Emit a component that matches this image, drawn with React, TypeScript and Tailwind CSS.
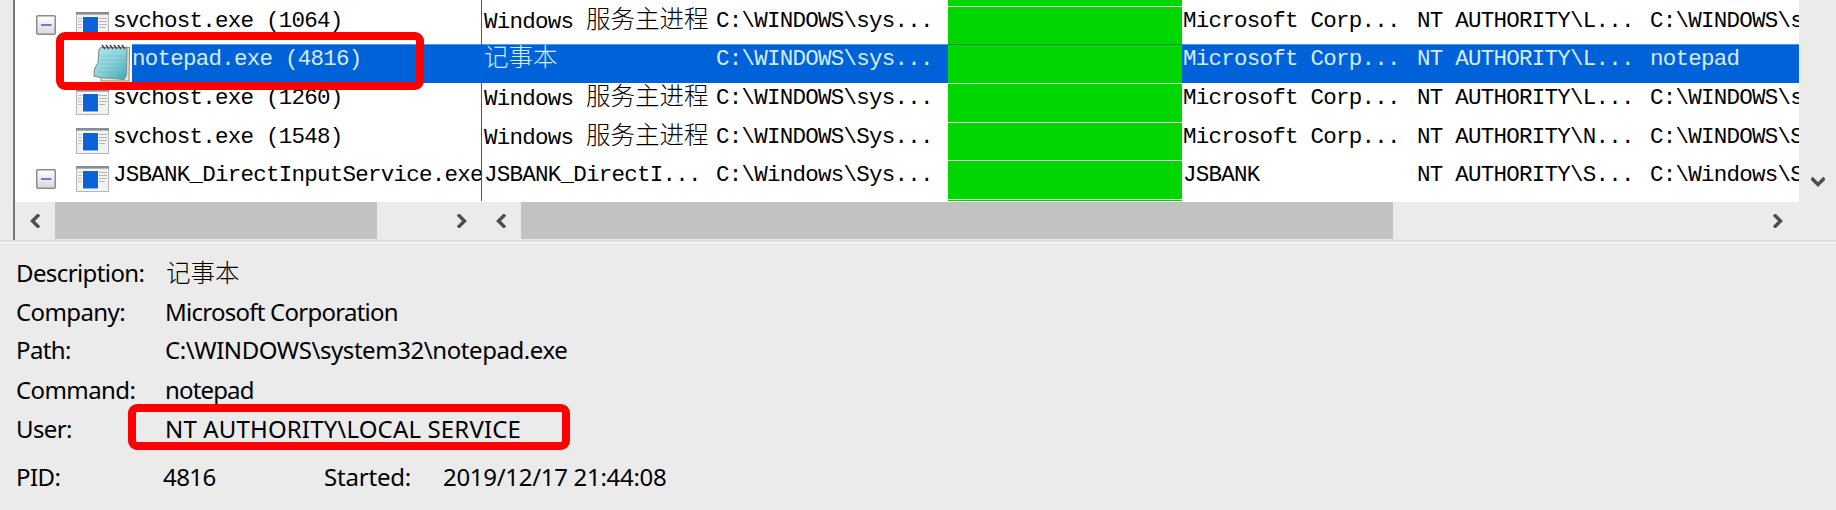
import React from "react";

type Row = {
  name: string;
  desc: React.ReactNode;
  path: string;
  company: string;
  user: string;
  command: string;
  kind: "plain" | "toggle" | "child";
  height: string;
};

const latin = "font-['Liberation_Mono','Noto_Sans_CJK_SC',monospace] text-[22.5px] tracking-[-0.75px]";

const Han = ({ children }: { children: string }) => (
  <span className="font-['Noto_Sans_CJK_SC',sans-serif] text-[24.5px] font-light leading-none tracking-normal">{children}</span>
);

const service = (
  <>
    Windows <Han>服务主进程</Han>
  </>
);

const rows: Row[] = [
  { name: "svchost.exe (1064)", desc: service, path: "C:\\WINDOWS\\sys...", company: "Microsoft Corp...", user: "NT AUTHORITY\\L...", command: "C:\\WINDOWS\\s", kind: "toggle", height: "h-[38px]" },
  { name: "notepad.exe (4816)", desc: <Han>记事本</Han>, path: "C:\\WINDOWS\\sys...", company: "Microsoft Corp...", user: "NT AUTHORITY\\L...", command: "notepad", kind: "child", height: "h-[39px]" },
  { name: "svchost.exe (1260)", desc: service, path: "C:\\WINDOWS\\sys...", company: "Microsoft Corp...", user: "NT AUTHORITY\\L...", command: "C:\\WINDOWS\\s", kind: "plain", height: "h-[39px]" },
  { name: "svchost.exe (1548)", desc: service, path: "C:\\WINDOWS\\Sys...", company: "Microsoft Corp...", user: "NT AUTHORITY\\N...", command: "C:\\WINDOWS\\S", kind: "plain", height: "h-[38px]" },
  { name: "JSBANK_DirectInputService.exe", desc: "JSBANK_DirectI...", path: "C:\\Windows\\Sys...", company: "JSBANK", user: "NT AUTHORITY\\S...", command: "C:\\Windows\\S", kind: "toggle", height: "h-[39px]" },
];

const Minus = () => (
  <svg width="20" height="20" viewBox="0 0 20 20">
    <defs>
      <linearGradient id="mg" x1="0" y1="0" x2="0" y2="1">
        <stop offset="0" stopColor="#fff" />
        <stop offset="1" stopColor="#d8d8d8" />
      </linearGradient>
    </defs>
    <rect x="0.75" y="0.75" width="18.5" height="18.5" rx="1" fill="url(#mg)" stroke="#8c8c8c" strokeWidth="1.5" />
    <path d="M5 10h10.500" stroke="#4b63b7" strokeWidth="1.6" />
  </svg>
);

const AppIcon = () => (
  <svg width="33" height="26" viewBox="0 0 33 26" className="shrink-0">
    <rect x="0.5" y="0.5" width="32" height="25" fill="#f1f2f2" stroke="#b4b8ba" />
    <rect width="33" height="2.600" fill="#868d92" />
    <path d="M2 6.500h4M2 9.500h4M2 12.500h4M2 15.500h4" stroke="#c4c4c4" />
    <path d="M23 6.500h8M23 9.500h8M23 12.500h8M23 15.500h6" stroke="#b4b4b4" />
    <rect x="6" y="4" width="17" height="19.500" fill="#fff" />
    <rect x="7" y="5" width="15" height="17.500" fill="#0a63d8" />
  </svg>
);

const NotepadIcon = () => (
  <svg width="38" height="38" viewBox="0 0 38 38" className="shrink-0">
    <defs>
      <linearGradient id="ng" x1="0" y1="0" x2="1" y2="1">
        <stop offset="0" stopColor="#b5e6ea" />
        <stop offset="0.5" stopColor="#8bd3db" />
        <stop offset="1" stopColor="#3fa4b4" />
      </linearGradient>
    </defs>
    <path d="M8 33.500V37H36L36.500 3.500L33 3Z" fill="#efe7d2" stroke="#9a8a66" strokeWidth="1.100" />
    <path d="M8 3.500H34L33.500 31L31 35.500L7 33.500L1 32L1.500 25L5 19L6 6Z" fill="url(#ng)" stroke="#7a8f90" strokeWidth="1.100" />
    <path d="M8 12h23M7.500 16h23M7 20h23M6 24h24M5 28h24" stroke="#64bac6" strokeWidth="0.6" />
    <path d="M9 1l3 4M13 1l3 4M17 1l3 4M21 1l3 4M25 1l3 4M29 1l3 4" stroke="#46433e" strokeWidth="1.500" />
  </svg>
);

const Chevron = ({ turn }: { turn: string }) => (
  <svg width="14" height="14" viewBox="0 0 14 14" className={turn}>
    <path d="M3 0.500L9.500 7L3 13.500" fill="none" stroke="#4d4d4d" strokeWidth="3.400" />
  </svg>
);

const Bar = ({ thumb, width, pad }: { thumb: string; width: string; pad: string }) => (
  <div className={`flex h-[37px] items-center justify-between ${width}`}>
    <div className="flex h-full items-center">
      <div className="flex w-10 justify-center pr-[1px]">
        <Chevron turn="rotate-180" />
      </div>
      <div className={`h-full bg-[#c2c2c2] ${thumb}`} />
    </div>
    <div className={pad}>
      <Chevron turn="" />
    </div>
  </div>
);

const TreeCell = ({ row }: { row: Row }) => {
  if (row.kind === "child")
    return (
      <div className="flex h-full w-[466px] shrink-0 pl-[78px]">
        <NotepadIcon />
        <div className="ml-[1px] h-full grow bg-[#0062d9] text-[#d5ecff] shadow-[inset_0_1px_0_#4a9be8]">{row.name}</div>
      </div>
    );
  return (
    <div className="flex h-full w-[466px] shrink-0">
      <div className="w-[61px] shrink-0 pl-[21px] pt-[9px]">{row.kind === "toggle" && <Minus />}</div>
      <div className="w-[37px] shrink-0 pt-[6px]">
        <AppIcon />
      </div>
      <div>{row.name}</div>
    </div>
  );
};

const TableRow = ({ row }: { row: Row }) => {
  const on = row.kind === "child";
  return (
    <div className={`flex ${row.height} w-[1784px] shrink-0 overflow-hidden whitespace-pre leading-[30px] ${latin}`}>
      <TreeCell row={row} />
      <div className="h-full w-px shrink-0 bg-[#555]" />
      <div
        className={`flex h-full grow overflow-hidden ${on ? "bg-[#0062d9] text-[#d5ecff] shadow-[inset_0_1px_0_#4a9be8]" : "text-black"}`}
      >
        <div className="w-[234px] shrink-0 pl-[2px]">{row.desc}</div>
        <div className="w-[232px] shrink-0">{row.path}</div>
        <div className={`h-full w-[234px] shrink-0 border-t bg-[#00d600] ${on ? "border-[#0a8a5c]" : "border-[#d8ffd0]"}`} />
        <div className="w-[233px] shrink-0 pl-[1px]">{row.company}</div>
        <div className="w-[233px] shrink-0 pl-[2px]">{row.user}</div>
        <div className="w-[150px] shrink-0 pl-[2px]">{row.command}</div>
      </div>
    </div>
  );
};

const Field = ({ label, value, height, spacing }: { label: string; value: React.ReactNode; height: string; spacing: string }) => (
  <div className={`flex ${height}`}>
    <div className="w-[149px]">{label}</div>
    <div className={spacing}>{value}</div>
  </div>
);

export default function App() {
  return (
    <div className="relative flex h-[510px] w-[1836px] flex-col overflow-hidden bg-[#ebebeb]">
      <div className="flex h-[240px] w-full shrink-0 pl-[13px]">
        <div className="w-[2px] shrink-0 bg-[#777]" />
        <div className="flex w-[1784px] shrink-0 flex-col">
          <div className="flex h-[202px] shrink-0 flex-col overflow-hidden rounded-br-[2px] bg-white">
            <div className="flex h-[6px] shrink-0">
              <div className="ml-[466px] w-px bg-[#555]" />
              <div className="ml-[466px] w-[234px] bg-[#00d600]" />
            </div>
            {rows.map((row) => (
              <TableRow key={row.name} row={row} />
            ))}
            <div className="flex h-[2px] shrink-0">
              <div className="ml-[466px] w-px bg-[#555]" />
              <div className="ml-[466px] w-[234px] border-t border-[#d8ffd0] bg-[#00d600]" />
            </div>
          </div>
          <div className="flex">
            <Bar thumb="w-[322px]" width="w-[466px]" pad="pr-[12px]" />
            <Bar thumb="w-[872px]" width="w-[1318px]" pad="pr-[14px]" />
          </div>
        </div>
        <div className="flex grow justify-center pt-[175px]">
          <Chevron turn="rotate-90" />
        </div>
      </div>
      <div className="h-[3px] shrink-0 border-b border-white bg-[#dfdfdf]" />
      <div className="flex flex-col whitespace-pre pl-4 pt-[13px] font-['Noto_Sans','Noto_Sans_CJK_SC',sans-serif] text-[24px] leading-[34px] tracking-[-0.6px] text-black">
        <Field label="Description:" value={<Han>记事本</Han>} height="h-[39px]" spacing="pl-[1px]" />
        <Field label="Company:" value="Microsoft Corporation" height="h-[38px]" spacing="tracking-[-0.75px]" />
        <Field label="Path:" value={"C:\\WINDOWS\\system32\\notepad.exe"} height="h-[40px]" spacing="tracking-[-0.43px]" />
        <Field label="Command:" value="notepad" height="h-[39px]" spacing="tracking-[-0.85px]" />
        <Field label="User:" value={"NT AUTHORITY\\LOCAL SERVICE"} height="h-[48px]" spacing="tracking-[0.15px]" />
        <div className="flex">
          <div className="w-[147px]">PID:</div>
          <div className="w-[161px]">4816</div>
          <div className="w-[119px] tracking-[-0.2px]">Started:</div>
          <div className="tracking-[-0.3px]">2019/12/17 21:44:08</div>
        </div>
      </div>
      <div className="absolute left-[56px] top-[32px] h-[58px] w-[368px] rounded-[9px] border-8 border-[#fe0000]" />
      <div className="absolute left-[128px] top-[404px] h-[46px] w-[442px] rounded-[9px] border-8 border-[#fe0000]" />
    </div>
  );
}
